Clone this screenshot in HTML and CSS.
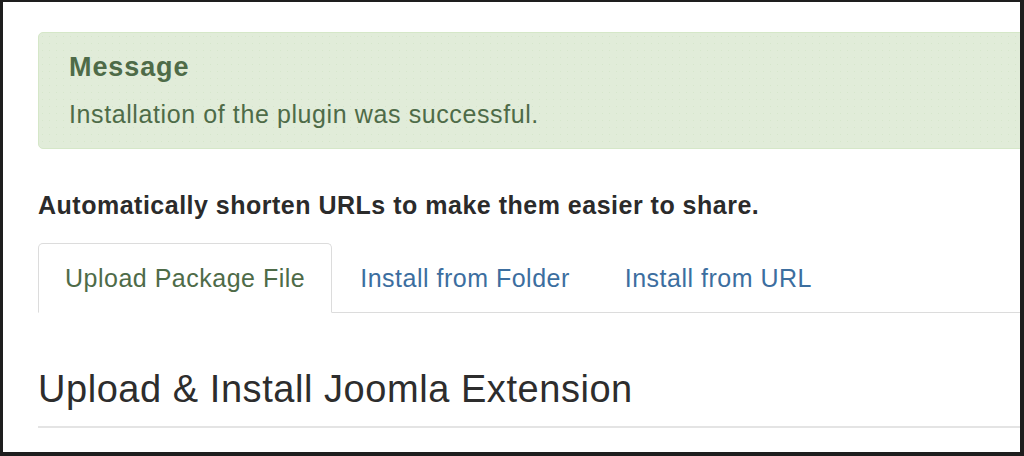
FILE: index.html
```html
<!DOCTYPE html>
<html>
<head>
<meta charset="utf-8">
<link rel="stylesheet" href="styles.css">
</head>
<body>
<div class="frame">
  <div class="content">
    <div class="alert">
      <h4 class="alert-heading">Message</h4>
      <p class="alert-text">Installation of the plugin was successful.</p>
    </div>
    <p class="desc">Automatically shorten URLs to make them easier to share.</p>
    <ul class="tabs">
      <li class="tab active">Upload Package File</li>
      <li class="tab">Install from Folder</li>
      <li class="tab">Install from URL</li>
    </ul>
    <h2 class="title">Upload &amp; Install Joomla Extension</h2>
    <hr class="rule">
  </div>
</div>
</body>
</html>
```
FILE: styles.css
```css
html, body {
  margin: 0;
  padding: 0;
  background: #fff;
}
.frame {
  box-sizing: border-box;
  width: 1024px;
  height: 456px;
  border-style: solid;
  border-color: #1e1e1e;
  border-width: 2px 4px 4px 3px;
  overflow: hidden;
  font-family: "Liberation Sans", Arial, sans-serif;
}
.content {
  width: 1100px;
  padding: 30px 0 0 35px;
}
.alert {
  box-sizing: border-box;
  height: 117px;
  background-color: #e1ecd9;
  background-image: radial-gradient(circle, rgba(195, 218, 182, 0.35) 0.6px, transparent 0.9px);
  background-size: 7px 7px;
  border: 1px solid #d5e7c8;
  border-radius: 5px;
  padding: 19px 30px 0 30px;
  color: #4e6b48;
}
.alert-heading {
  margin: 0;
  font-size: 27px;
  line-height: 30px;
  letter-spacing: 0.9px;
  font-weight: bold;
}
.alert-text {
  margin: 17px 0 0 0;
  font-size: 25px;
  line-height: 30px;
  letter-spacing: 0.6px;
}
.desc {
  margin: 41px 0 0 0;
  font-size: 25px;
  line-height: 30px;
  letter-spacing: 0.5px;
  font-weight: bold;
  color: #2b2b2b;
}
.tabs {
  list-style: none;
  margin: 23px 0 0 0;
  padding: 0;
  display: flex;
  border-bottom: 1px solid #dcdcdc;
  width: 982px;
}
.tab {
  padding: 0 26px;
  height: 68px;
  line-height: 68px;
  font-size: 25px;
  letter-spacing: 0.5px;
  color: #3c6e9f;
  border: 1px solid transparent;
  margin: 0 1px -1px 0;
}
.tab.active {
  color: #4e6b48;
  border-color: #dcdcdc;
  border-bottom-color: #fff;
  border-radius: 5px 5px 0 0;
  background: #fff;
}
.title {
  margin: 54px 0 0 0;
  font-size: 38px;
  line-height: 44px;
  letter-spacing: 0.55px;
  font-weight: normal;
  color: #2d2d2d;
}
.rule {
  margin: 15px 0 0 0;
  border: 0;
  height: 2px;
  background: #e4e4e4;
  width: 982px;
}
```
